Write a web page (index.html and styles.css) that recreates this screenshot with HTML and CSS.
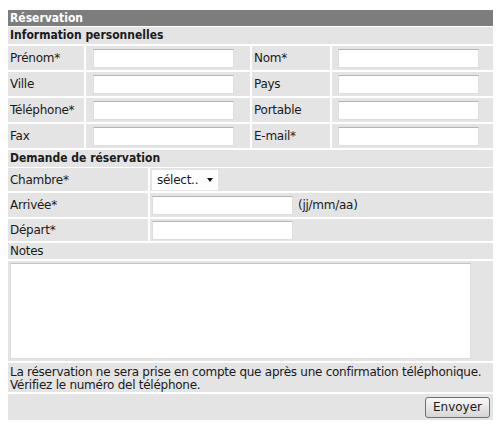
FILE: index.html
```html
<!DOCTYPE html>
<html lang="fr">
<head>
<meta charset="utf-8">
<title>Réservation</title>
<link rel="stylesheet" href="styles.css">
</head>
<body>
<form class="form">
  <div class="title">Réservation</div>
  <div class="section sec-first">Information personnelles</div>
  <div class="grid4">
    <div class="cell lab">Prénom*</div>
    <div class="cell fld"><input class="txt" type="text"></div>
    <div class="cell lab">Nom*</div>
    <div class="cell fld fld-r"><input class="txt" type="text"></div>

    <div class="cell lab">Ville</div>
    <div class="cell fld"><input class="txt" type="text"></div>
    <div class="cell lab">Pays</div>
    <div class="cell fld fld-r"><input class="txt" type="text"></div>

    <div class="cell lab">Téléphone*</div>
    <div class="cell fld"><input class="txt" type="text"></div>
    <div class="cell lab">Portable</div>
    <div class="cell fld fld-r"><input class="txt" type="text"></div>

    <div class="cell lab">Fax</div>
    <div class="cell fld"><input class="txt" type="text"></div>
    <div class="cell lab">E-mail*</div>
    <div class="cell fld fld-r"><input class="txt" type="text"></div>
  </div>
  <div class="section">Demande de réservation</div>
  <div class="grid2">
    <div class="cell lab">Chambre*</div>
    <div class="cell fld2"><span class="sel"><select class="select"><option>sélect..</option></select></span></div>

    <div class="cell lab">Arrivée*</div>
    <div class="cell fld2"><input class="txt" type="text"><span class="hint">(jj/mm/aa)</span></div>

    <div class="cell lab">Départ*</div>
    <div class="cell fld2"><input class="txt" type="text"></div>
  </div>
  <div class="row notes-lab">Notes</div>
  <div class="row notes"><textarea class="area"></textarea></div>
  <div class="row info">La réservation ne sera prise en compte que après une confirmation téléphonique.<br>Vérifiez le numéro del téléphone.</div>
  <div class="row actions"><button type="button" class="btn">Envoyer</button></div>
</form>
</body>
</html>
```

FILE: styles.css
```css
html, body {
  margin: 0;
  padding: 0;
  background: #ffffff;
}
body {
  padding: 10px 7px 0 8px;
  font-family: "DejaVu Sans", Verdana, sans-serif;
  font-size: 12px;
  letter-spacing: -0.26px;
  color: #1a1a1a;
}
.form {
  width: 485px;
  display: flex;
  flex-direction: column;
  gap: 2px;
}
.title {
  height: 16px;
  line-height: 16px;
  background: #7d7d7d;
  color: #ffffff;
  font-family: "DejaVu Sans Condensed", "DejaVu Sans", sans-serif;
  font-weight: bold;
  letter-spacing: 0;
  padding-left: 2px;
}
.section {
  height: 17px;
  line-height: 17px;
  background: #e4e4e4;
  font-family: "DejaVu Sans Condensed", "DejaVu Sans", sans-serif;
  font-weight: bold;
  letter-spacing: 0;
  padding-left: 2px;
}
.sec-first {
  margin-top: -1px;
}
.grid4 {
  display: grid;
  grid-template-columns: 76px 164px 78px 161px;
  grid-auto-rows: 24px;
  gap: 2px;
}
.grid2 {
  display: grid;
  grid-template-columns: 140px 343px;
  grid-template-rows: 23px 24px 22px;
  gap: 2px;
  margin-top: -1px;
}
.cell {
  background: #e4e4e4;
  display: flex;
  align-items: center;
}
.lab {
  padding-left: 2px;
}
.fld {
  padding-left: 7px;
}
.fld-r {
  padding-left: 6px;
}
.fld2 {
  padding-left: 2px;
}
.txt {
  box-sizing: border-box;
  width: 141px;
  height: 19px;
  margin: 0;
  padding: 0 2px;
  border: 1px solid #dedede;
  border-top-color: #b4b4b4;
  background: #ffffff;
  font: inherit;
}
.hint {
  margin-left: 5px;
}
.sel {
  position: relative;
  display: inline-block;
}
.sel::after {
  content: "";
  position: absolute;
  right: 5px;
  top: 8px;
  border-left: 3px solid transparent;
  border-right: 3px solid transparent;
  border-top: 4px solid #111111;
  pointer-events: none;
}
.select {
  appearance: none;
  -webkit-appearance: none;
  box-sizing: border-box;
  width: 66px;
  height: 20px;
  margin: 0;
  padding: 0 0 0 5px;
  border: 0;
  background: #ffffff;
  font: inherit;
  letter-spacing: -0.26px;
  color: #1a1a1a;
}
.row {
  background: #e4e4e4;
  padding-left: 2px;
}
.notes-lab {
  height: 16px;
  line-height: 16px;
}
.notes {
  height: 100px;
  padding-top: 2px;
  box-sizing: border-box;
}
.area {
  display: block;
  box-sizing: border-box;
  width: 461px;
  height: 96px;
  margin: 0;
  border: 1px solid #dedede;
  border-top-color: #c4c4c4;
  background: #ffffff;
  resize: none;
}
.info {
  height: 29px;
  line-height: 13px;
  padding-top: 3px;
  box-sizing: border-box;
}
.actions {
  height: 26px;
  display: flex;
  justify-content: flex-end;
  align-items: center;
  padding-right: 3px;
}
.btn {
  box-sizing: border-box;
  width: 65px;
  height: 21px;
  margin: 0;
  padding: 0;
  border: 1px solid #707070;
  border-radius: 3px;
  background: linear-gradient(#f8f8f8, #e6e6e6 50%, #d6d6d6);
  font: inherit;
  color: #1a1a1a;
}
```
